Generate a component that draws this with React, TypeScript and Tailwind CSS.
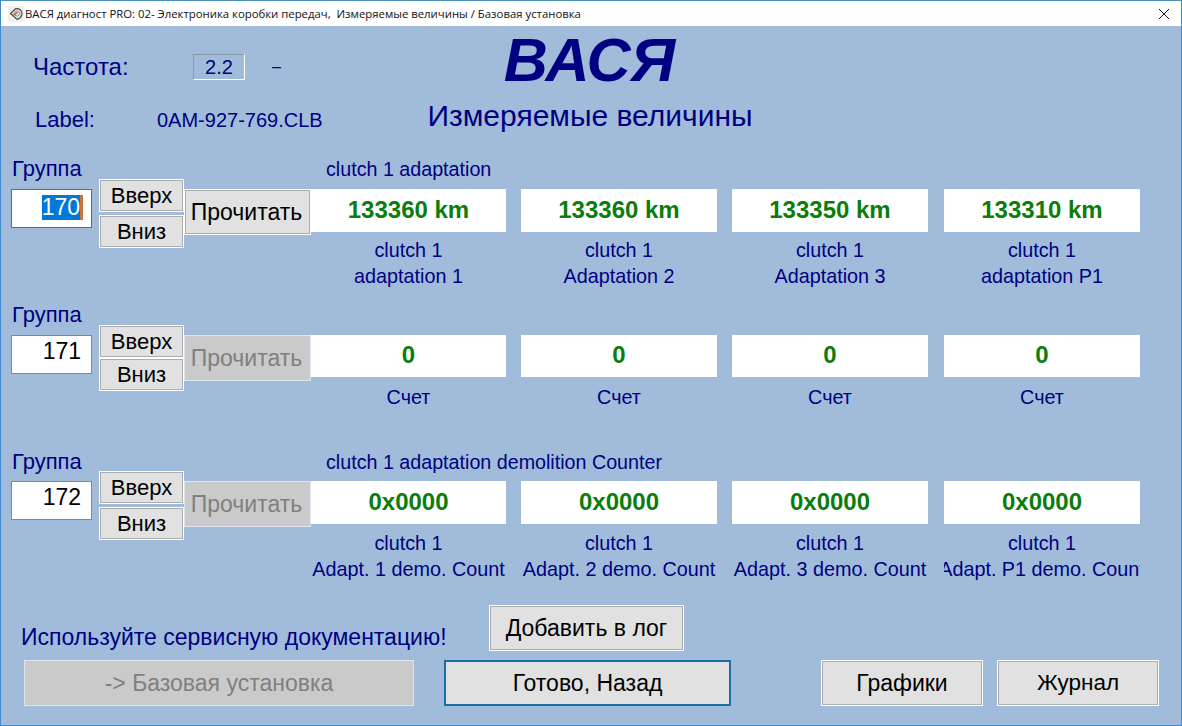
const sans = { fontFamily: '"Liberation Sans", Arial, sans-serif' };

type GroupProps = {
  num: string;
  title?: string;
  active?: boolean;
  gap: string;
  head: string;
  cardH: string;
  labelMt: string;
  values: string[];
  labels: string[][];
};

function Btn({ children, className }: { children: React.ReactNode; className: string }) {
  return (
    <div
      className={
        "flex items-center justify-center border border-white bg-[#e1e1e1] text-black shadow-[inset_0_0_0_1px_#adadad] " +
        className
      }
    >
      {children}
    </div>
  );
}

function Group({ num, title, active, gap, head, cardH, labelMt, values, labels }: GroupProps) {
  return (
    <div className="flex h-[146px] pl-[10px]">
      {/* group number */}
      <div className="w-[88px]">
        <div className={"h-[22px] pl-[1px] text-[22px] text-[#000080] " + head}>Группа</div>
        <div
          className={
            "mt-[9px] flex h-[39px] w-[81px] items-center justify-end border bg-white pr-[8px] text-[23px] text-black " +
            (active ? "border-[#2f78b8]" : "border-[#7a8a9a]")
          }
        >
          {active ? (
            <span className="mb-[2px] border-r-[3px] border-[#c8743a] bg-[#0078d7] leading-[25px] text-white">
              {num}
            </span>
          ) : (
            <span className="mb-[6px] mr-[2px]">{num}</span>
          )}
        </div>
      </div>
      {/* up / down */}
      <div className={"flex w-[85px] flex-col pt-[21px] text-[22px] " + gap}>
        <Btn className="h-[33px] w-[85px]">Вверх</Btn>
        <Btn className="h-[33px] w-[85px]">Вниз</Btn>
      </div>
      {/* read button */}
      <div className="w-[127px] pt-[31px]">
        {active ? (
          <Btn className="h-[46px] w-[127px] whitespace-nowrap pr-[2px] text-[23px]">Прочитать</Btn>
        ) : (
          <div className="flex h-[46px] w-[127px] items-center justify-center whitespace-nowrap border border-[#dde6f0] bg-[#cacaca] pr-[2px] text-[23px] text-[#808080]">
            Прочитать
          </div>
        )}
      </div>
      {/* values */}
      <div className="w-[830px]">
        <div className={"h-[22px] pl-[15px] text-[19.7px] text-[#000080] " + head}>{title}</div>
        <div className="mt-[9px] grid grid-cols-[195px_196px_196px_197px] gap-x-[15px]">
          {values.map((v, i) => (
            <div key={i} className={i === 3 ? "min-w-0 pl-[1px]" : "min-w-0"}>
              <div
                className={
                  "flex items-center justify-center bg-white pb-[2px] text-[24px] font-bold text-[#0a7d0a] " + cardH
                }
              >
                {v}
              </div>
              <div className={"overflow-hidden text-[19.8px] leading-[26px] text-[#000080] " + labelMt}>
                {labels[i].map((l) => (
                  <div key={l} className="flex justify-center whitespace-nowrap">
                    {l}
                  </div>
                ))}
              </div>
            </div>
          ))}
        </div>
      </div>
    </div>
  );
}

export default function App() {
  return (
    <div
      className="flex h-[726px] w-[1182px] flex-col overflow-hidden border border-t-0 border-[#3c8ad0] bg-[#a0bcda]"
      style={sans}
    >
      {/* title bar */}
      <div className="flex h-[26px] flex-none items-center border-t border-[#4a90b8] bg-white pl-[7px]">
        <svg width="16" height="16" viewBox="0 0 16 16" className="flex-none">
          <rect width="16" height="16" rx="2" fill="#f0f0f0" />
          <path
            d="M2.5 7.5 7.5 2.8C10.5 1.8 14 4 14 7.5 14 10.5 11.5 12.6 9 13.4Z"
            fill="#e2e2e2"
            stroke="#4a4a4a"
            strokeWidth="1.2"
            strokeLinejoin="round"
          />
          <circle cx="9" cy="7.5" r="2.5" fill="#fff" stroke="#777" strokeWidth="0.8" />
          <path d="M5.5 9 9.5 6.5" stroke="#c8602a" strokeWidth="1.5" />
        </svg>
        <div
          className="ml-[1px] flex-1 whitespace-pre text-[11.35px] text-[#111]"
          style={{ fontFamily: '"Open Sans", "Noto Sans", sans-serif' }}
        >
          ВАСЯ диагност PRO: 02- Электроника коробки передач,  Измеряемые величины / Базовая установка
        </div>
        <svg width="12" height="12" viewBox="0 0 12 12" className="mr-[11px] flex-none">
          <path d="M1 1 11 11M11 1 1 11" stroke="#111" strokeWidth="1" />
        </svg>
      </div>

      {/* header */}
      <div className="flex h-[132px] flex-none">
        <div className="w-[425px] flex-none pl-[32px] pt-[27px] text-[#000080]">
          <div className="flex h-[28px] items-center">
            <span className="w-[160px] text-[24px]">Частота:</span>
            <span className="flex h-[26px] w-[52px] items-center justify-center border border-b-white border-l-[#8a9aaa] border-r-white border-t-[#8a9aaa] text-[20px]">
              2.2
            </span>
            <span className="ml-[27px] text-[16px]">–</span>
          </div>
          <div className="mt-[24px] flex h-[28px] items-center pl-[2px]">
            <span className="w-[122px] text-[22px]">Label:</span>
            <span className="pt-[2px] text-[20px]">0AM-927-769.CLB</span>
          </div>
        </div>
        <div className="w-[328px] flex-none text-center text-[#000080]">
          <div className="mt-[-2px] h-[72px] pr-[1px] text-[61px] font-bold italic leading-[72px]">ВАСЯ</div>
          <div className="mt-[3px] whitespace-nowrap text-[30px] leading-[34px]">Измеряемые величины</div>
        </div>
      </div>

      <Group
        num="170"
        active
        gap="gap-[3px]"
        head="leading-[22px]"
        cardH="h-[43px]"
        labelMt="mt-[5px]"
        title="clutch 1 adaptation"
        values={["133360 km", "133360 km", "133350 km", "133310 km"]}
        labels={[
          ["clutch 1", "adaptation 1"],
          ["clutch 1", "Adaptation 2"],
          ["clutch 1", "Adaptation 3"],
          ["clutch 1", "adaptation P1"],
        ]}
      />
      <Group
        num="171"
        gap="gap-[0px]"
        head="leading-[22px]"
        cardH="h-[42px]"
        labelMt="mt-[7px]"
        values={["0", "0", "0", "0"]}
        labels={[["Счет"], ["Счет"], ["Счет"], ["Счет"]]}
      />
      <Group
        num="172"
        gap="gap-[3px]"
        head="leading-[24px]"
        cardH="h-[43px]"
        labelMt="mt-[6px]"
        title="clutch 1 adaptation demolition Counter"
        values={["0x0000", "0x0000", "0x0000", "0x0000"]}
        labels={[
          ["clutch 1", "Adapt. 1 demo. Count"],
          ["clutch 1", "Adapt. 2 demo. Count"],
          ["clutch 1", "Adapt. 3 demo. Count"],
          ["clutch 1", "Adapt. P1 demo. Count"],
        ]}
      />

      {/* footer */}
      <div className="mt-[8px] flex h-[47px] flex-none items-end pl-[20px]">
        <div className="w-[468px] whitespace-nowrap text-[23px] leading-[28px] text-[#000080]">
          Используйте сервисную документацию!
        </div>
        <Btn className="h-[46px] w-[195px] text-[23px]">Добавить в лог</Btn>
      </div>
      <div className="mt-[9px] flex flex-none pl-[23px] text-[23px]">
        <div className="flex h-[46px] w-[390px] items-center justify-center border border-[#dde6f0] bg-[#cacaca] text-[#808080]">
          -&gt; Базовая установка
        </div>
        <div className="ml-[30px] flex h-[46px] w-[287px] items-center justify-center border-2 border-[#1c6ea4] bg-[#e1e1e1] text-black">
          Готово, Назад
        </div>
        <Btn className="ml-[90px] h-[46px] w-[162px]">Графики</Btn>
        <Btn className="ml-[14px] h-[46px] w-[162px] text-[22.5px]">Журнал</Btn>
      </div>
    </div>
  );
}
